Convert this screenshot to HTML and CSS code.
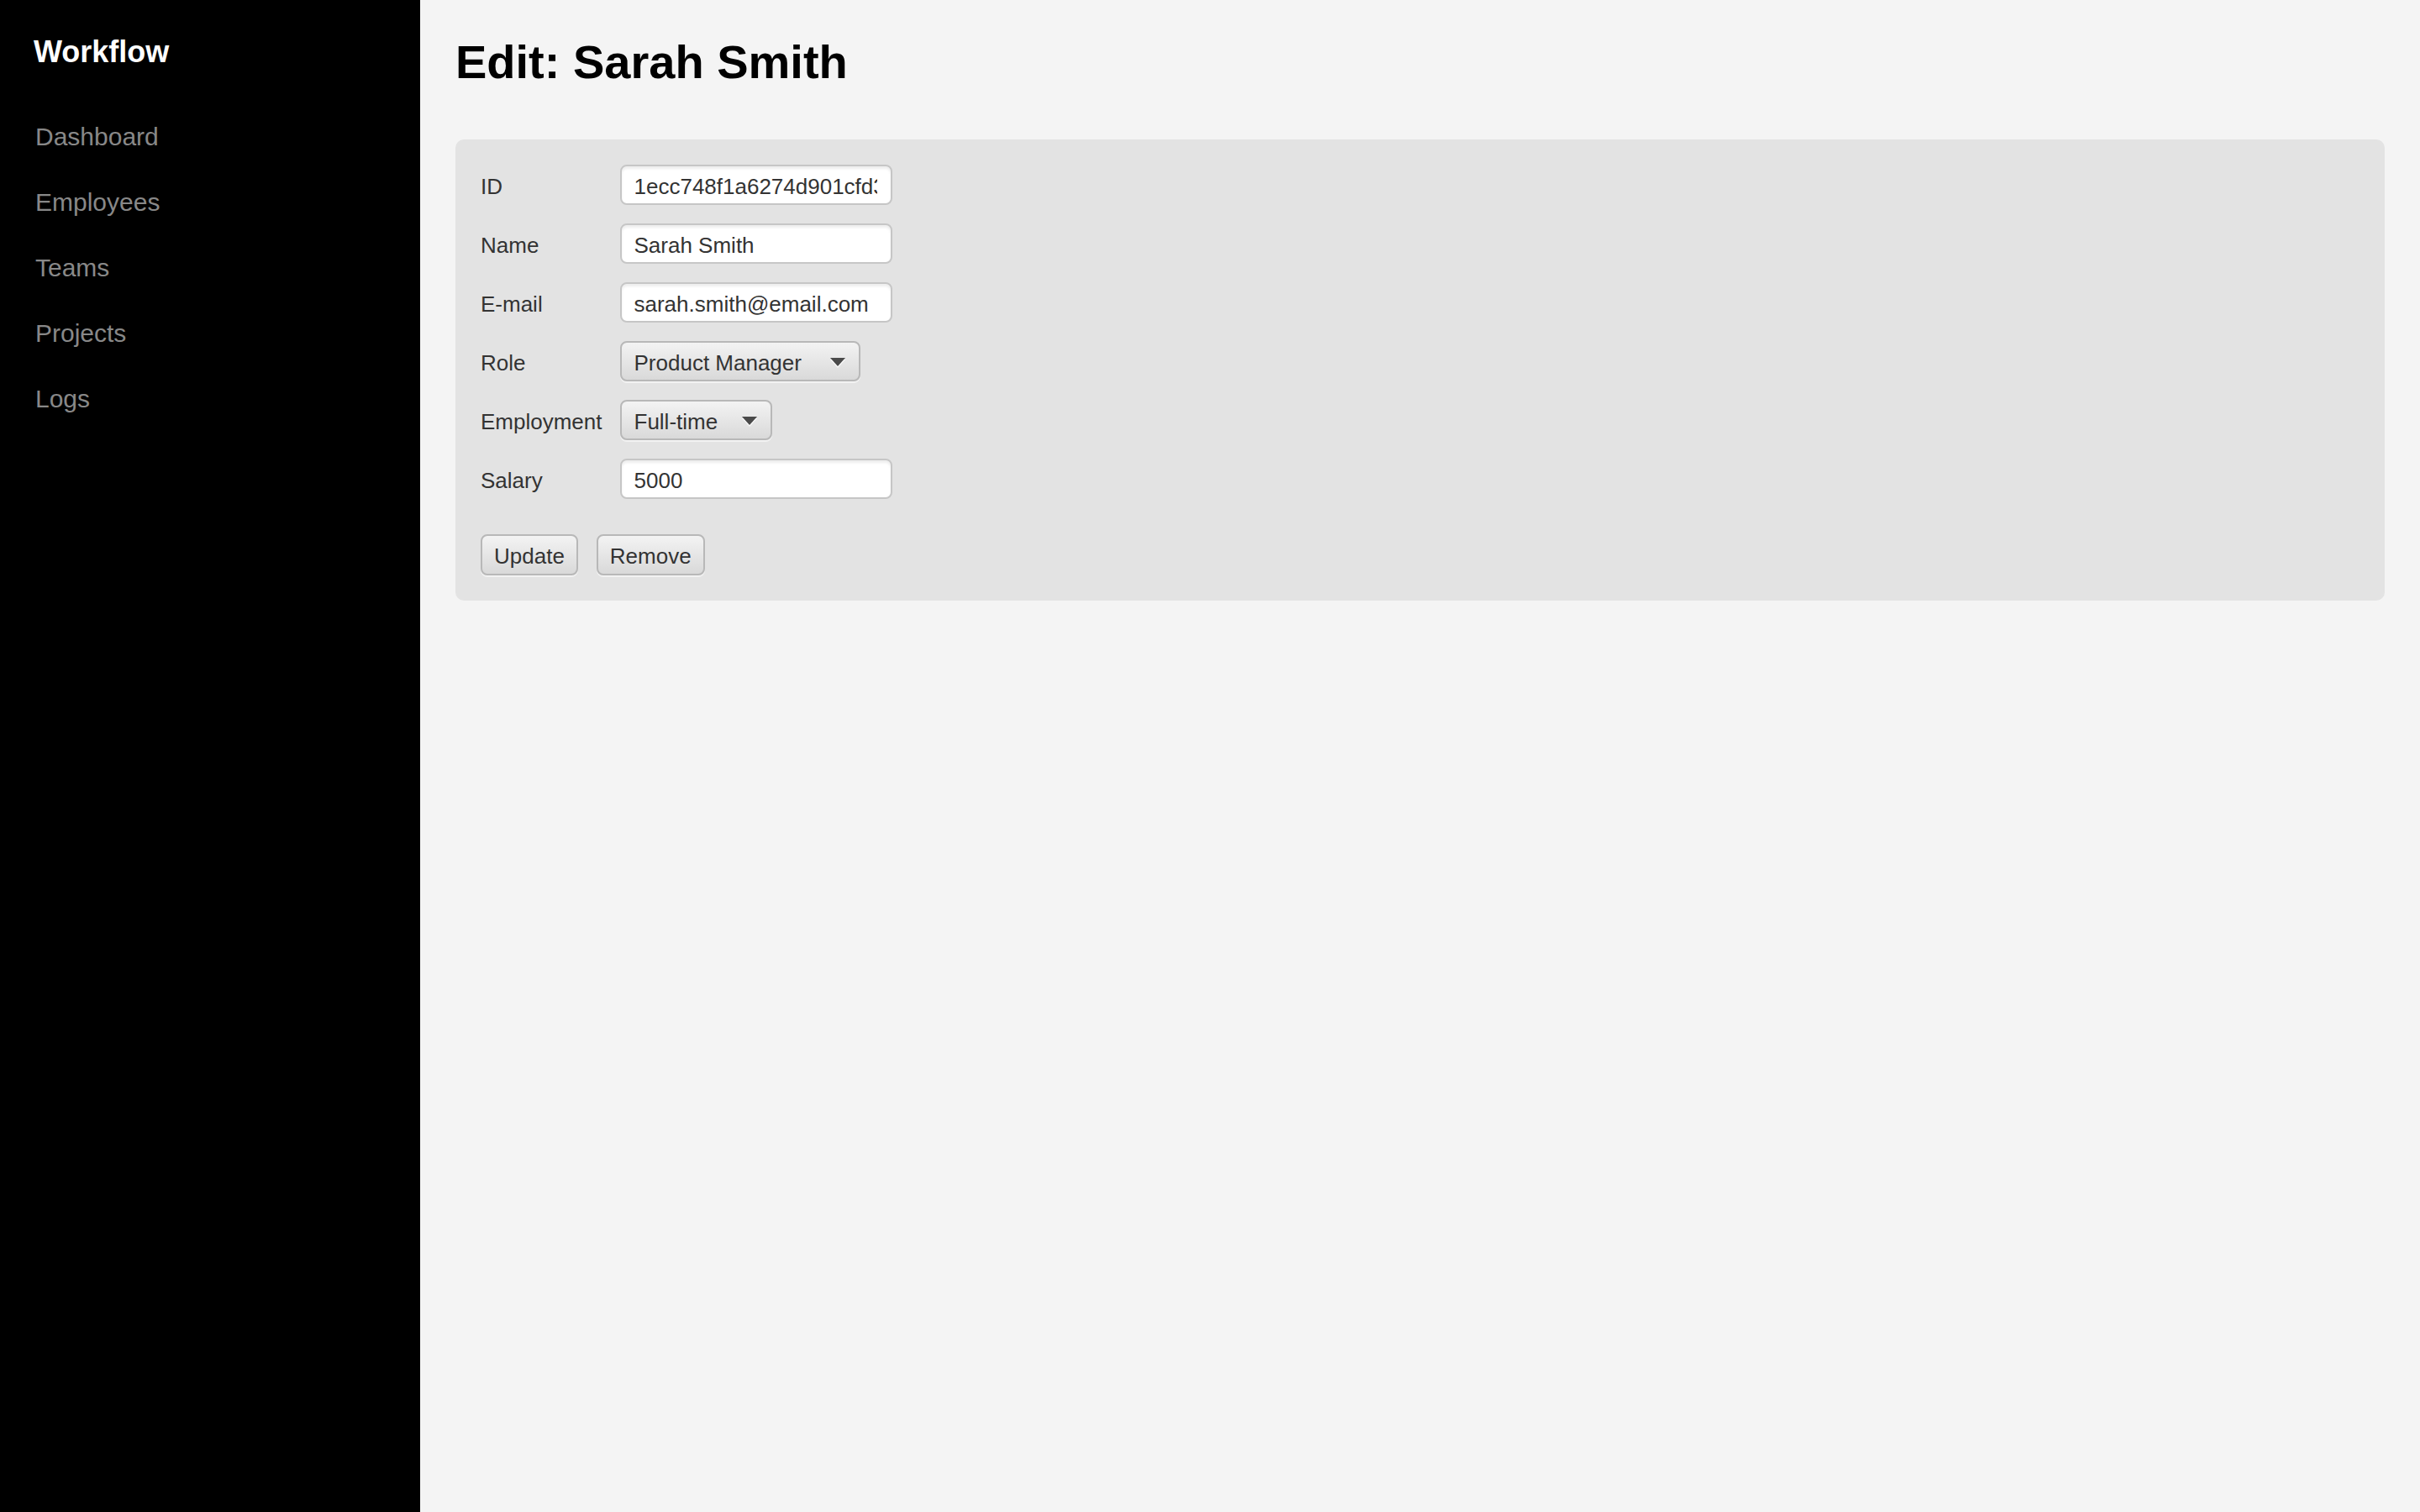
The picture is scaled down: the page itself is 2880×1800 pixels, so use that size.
FILE: index.html
```html
<!DOCTYPE html>
<html lang="en">
<head>
<meta charset="utf-8">
<title>Edit: Sarah Smith</title>
<link rel="stylesheet" href="styles.css">
</head>
<body>
<div class="app">
  <aside class="sidebar">
    <div class="brand">Workflow</div>
    <nav class="nav">
      <a class="nav-link" href="#">Dashboard</a>
      <a class="nav-link" href="#">Employees</a>
      <a class="nav-link" href="#">Teams</a>
      <a class="nav-link" href="#">Projects</a>
      <a class="nav-link" href="#">Logs</a>
    </nav>
  </aside>
  <main class="main">
    <h1 class="title">Edit: Sarah Smith</h1>
    <form class="panel">
      <div class="fields">
        <label class="label" for="f-id">ID</label>
        <input class="input" id="f-id" type="text" value="1ecc748f1a6274d901cfd3a5b2e8c7">
        <label class="label" for="f-name">Name</label>
        <input class="input" id="f-name" type="text" value="Sarah Smith">
        <label class="label" for="f-email">E-mail</label>
        <input class="input" id="f-email" type="text" value="sarah.smith@email.com">
        <span class="label">Role</span>
        <div class="select select-role"><span>Product Manager</span><svg class="caret" width="18" height="10" viewBox="0 0 18 10"><path d="M0 0H18L9 10Z"/></svg></div>
        <span class="label">Employment</span>
        <div class="select select-employment"><span>Full-time</span><svg class="caret" width="18" height="10" viewBox="0 0 18 10"><path d="M0 0H18L9 10Z"/></svg></div>
        <label class="label" for="f-salary">Salary</label>
        <input class="input" id="f-salary" type="text" value="5000">
      </div>
      <div class="actions">
        <button class="btn" type="button">Update</button>
        <button class="btn" type="button">Remove</button>
      </div>
    </form>
  </main>
</div>
</body>
</html>
```

FILE: styles.css
```css
html, body {
  margin: 0;
  padding: 0;
}

body {
  font-family: "Liberation Sans", Arial, sans-serif;
  background: #f4f4f4;
}

.app {
  display: flex;
  min-height: 100vh;
}

.sidebar {
  width: 500px;
  flex: 0 0 500px;
  box-sizing: border-box;
  background: #000;
  padding: 40px;
}

.brand {
  color: #fff;
  font-size: 36px;
  font-weight: bold;
  line-height: 44px;
}

.nav {
  margin-top: 40px;
  padding-left: 2px;
  display: flex;
  flex-direction: column;
}

.nav-link {
  display: block;
  color: #888;
  font-size: 30px;
  line-height: 78px;
  text-decoration: none;
}

.main {
  flex: 1;
  background: #f4f4f4;
  padding: 42px;
}

.title {
  margin: 0 0 60px;
  font-size: 56px;
  line-height: 64px;
  font-weight: bold;
  color: #000;
}

.panel {
  background: #e3e3e3;
  border-radius: 10px;
  padding: 30px 30px 30px 30px;
}

.fields {
  display: grid;
  grid-template-columns: max-content max-content;
  column-gap: 21px;
  row-gap: 22px;
  align-items: center;
  justify-items: start;
}

.label {
  font-size: 26px;
  color: #333;
  padding-top: 4px;
}

.input {
  box-sizing: border-box;
  width: 324px;
  height: 48px;
  margin: 0;
  padding: 4px 16px 0 15px;
  border: 2px solid #c6c6c6;
  border-radius: 8px;
  background: #fff;
  box-shadow: inset 0 3px 3px rgba(0, 0, 0, 0.07);
  font-family: "Liberation Sans", Arial, sans-serif;
  font-size: 26px;
  color: #333;
  outline: none;
}

.select {
  box-sizing: border-box;
  height: 48px;
  display: flex;
  align-items: center;
  justify-content: space-between;
  padding: 4px 16px 0 15px;
  border: 2px solid #b8b8b8;
  border-radius: 8px;
  background: linear-gradient(#f3f3f3, #d9d9d9);
  box-shadow: 0 2px 0 rgba(255, 255, 255, 0.55);
  font-size: 26px;
  color: #333;
}

.select-role {
  width: 286px;
}

.select-employment {
  width: 181px;
}

.caret {
  fill: #4a4a4a;
  margin-top: -2px;
  filter: drop-shadow(0 2px 0 rgba(255, 255, 255, 0.8));
}

.actions {
  display: flex;
  gap: 22px;
  margin-top: 42px;
}

.btn {
  box-sizing: border-box;
  height: 49px;
  margin: 0;
  padding: 4px 14px 0;
  border: 2px solid #b8b8b8;
  border-radius: 8px;
  background: linear-gradient(#f3f3f3, #d9d9d9);
  box-shadow: 0 2px 0 rgba(255, 255, 255, 0.55);
  font-family: "Liberation Sans", Arial, sans-serif;
  font-size: 26px;
  color: #333;
  cursor: pointer;
}
```
